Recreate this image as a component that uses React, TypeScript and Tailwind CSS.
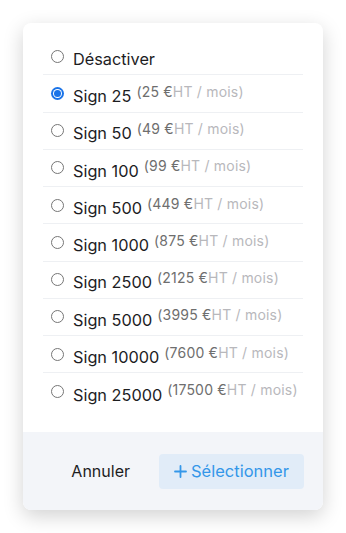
import { useState } from "react";

const plans = [
  { id: "off", label: "Désactiver" },
  { id: "25", label: "Sign 25", price: "25" },
  { id: "50", label: "Sign 50", price: "49" },
  { id: "100", label: "Sign 100", price: "99" },
  { id: "500", label: "Sign 500", price: "449" },
  { id: "1000", label: "Sign 1000", price: "875" },
  { id: "2500", label: "Sign 2500", price: "2125" },
  { id: "5000", label: "Sign 5000", price: "3995" },
  { id: "10000", label: "Sign 10000", price: "7600" },
  { id: "25000", label: "Sign 25000", price: "17500" },
];

function Radio({ checked }: { checked: boolean }) {
  if (checked)
    return (
      <span className="w-[13px] h-[13px] rounded-full bg-[#1a73e8] flex items-center justify-center shrink-0">
        <span className="w-[9px] h-[9px] rounded-full bg-white flex items-center justify-center">
          <span className="w-[7px] h-[7px] rounded-full bg-[#1a73e8]" />
        </span>
      </span>
    );
  return <span className="w-[13px] h-[13px] rounded-full border border-[#767676] bg-white shrink-0" />;
}

export default function App() {
  const [selected, setSelected] = useState("25");

  return (
    <div className="w-[346px] h-[533px] bg-white p-[23px] font-['Inter',sans-serif]">
      <div className="w-[300px] h-[487px] rounded-lg bg-white shadow-[0_6px_20px_rgba(0,0,0,0.18)] flex flex-col overflow-hidden">
        <div className="flex-1 px-5 pt-[15px]">
          {plans.map((p, i) => (
            <label
              key={p.id}
              onClick={() => setSelected(p.id)}
              className={`flex items-center h-[37.25px] pl-2 cursor-pointer ${i < plans.length - 1 ? "border-b border-[#eef0f3]" : ""}`}
            >
              <Radio checked={selected === p.id} />
              <span className="ml-[9px] text-[16.3px] text-[#1d1d1f] leading-none pt-[6px]">{p.label}</span>
              {p.price && (
                <span className="ml-[5px] text-[14px] tracking-[0.2px] leading-none self-start mt-[9.5px]">
                  <span className="text-[#6e6e6e]">({p.price} €</span>
                  <span className="text-[#b8b8bc]">HT / mois)</span>
                </span>
              )}
            </label>
          ))}
        </div>
        <div className="h-[78px] bg-[#f3f5f9] flex items-center justify-end pr-[19px] gap-[13px]">
          <button className="px-4 h-[35px] text-[16px] text-[#1d1d1f]">Annuler</button>
          <button className="h-[35px] w-[145px] rounded bg-[#e1ecf8] text-[#3497e9] text-[16.5px] flex items-center pl-[15px] gap-[4px]">
            <svg width="13" height="13" viewBox="0 0 13 13" fill="none" stroke="currentColor" strokeWidth="1.8" strokeLinecap="round">
              <path d="M6.5 1v11M1 6.5h11" />
            </svg>
            Sélectionner
          </button>
        </div>
      </div>
    </div>
  );
}
